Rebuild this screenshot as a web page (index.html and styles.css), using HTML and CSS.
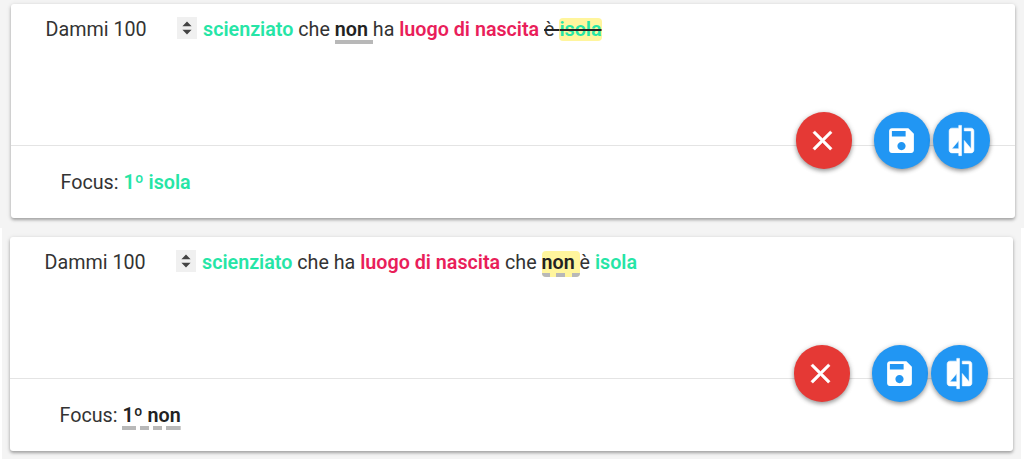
FILE: index.html
```html
<!DOCTYPE html>
<html lang="it">
<head>
<meta charset="utf-8">
<title>Dammi 100</title>
<link rel="stylesheet" href="styles.css">
</head>
<body>
<svg class="defs" aria-hidden="true">
  <symbol id="close" viewBox="0 0 24 24"><path stroke="#fff" stroke-width=".35" d="M19 6.41L17.59 5 12 10.59 6.41 5 5 6.41 10.59 12 5 17.59 6.41 19 12 13.41 17.59 19 19 17.59 13.41 12z"/></symbol>
  <symbol id="save" viewBox="0 0 24 24"><path d="M17 3H5c-1.11 0-2 .9-2 2v14c0 1.1.89 2 2 2h14c1.1 0 2-.9 2-2V7l-4-4zm-5 16c-1.66 0-3-1.34-3-3s1.34-3 3-3 3 1.34 3 3-1.34 3-3 3zm3-10H5V5h10v4z"/></symbol>
  <symbol id="compare" viewBox="0 0 24 24"><path stroke="#fff" stroke-width=".4" d="M10 3H5c-1.1 0-2 .9-2 2v14c0 1.1.9 2 2 2h5v2h2V1h-2v2zm0 15H5l5-6v6zm9-15h-5v2h5v13l-5-6v9h5c1.1 0 2-.9 2-2V5c0-1.1-.9-2-2-2z"/></symbol>
  <symbol id="spin" viewBox="0 0 20 22"><path d="M10 4.5l4.6 4.7H5.4zM10 17.5l4.6-4.7H5.4z"/></symbol>
</svg>

<section class="screen screen-first">
  <article class="card">
    <div class="query">
      <span class="limit">Dammi 100</span>
      <svg class="spin"><use href="#spin"/></svg>
      <p class="sentence"><b class="entity">scienziato</b> che <b class="neg">non </b>ha <b class="relation">luogo di nascita</b> <span class="removed">è <b class="entity mark">isola</b></span></p>
    </div>
    <div class="focus">Focus: <b class="entity">1º isola</b></div>
    <div class="actions">
      <button class="fab fab-close"><svg><use href="#close"/></svg></button>
      <button class="fab"><svg><use href="#save"/></svg></button>
      <button class="fab"><svg><use href="#compare"/></svg></button>
    </div>
  </article>
</section>

<section class="screen screen-second">
  <article class="card">
    <div class="query">
      <span class="limit">Dammi 100</span>
      <svg class="spin"><use href="#spin"/></svg>
      <p class="sentence"><b class="entity">scienziato</b> che ha <b class="relation">luogo di nascita</b> che <b class="neg neg-mark">non </b>è <b class="entity">isola</b></p>
    </div>
    <div class="focus">Focus: <b class="neg neg-focus">1º non</b></div>
    <div class="actions">
      <button class="fab fab-close"><svg><use href="#close"/></svg></button>
      <button class="fab"><svg><use href="#save"/></svg></button>
      <button class="fab"><svg><use href="#compare"/></svg></button>
    </div>
  </article>
</section>
</body>
</html>
```
FILE: styles.css
```css
* { box-sizing: border-box; }
body {
  margin: 0;
  height: 459px;
  overflow: hidden;
  background: #fff;
  color: #333;
  font: 400 19.72px/26px Roboto, sans-serif;
}
.defs { display: none; }
.screen { background: #f4f4f4; }
.screen-first { height: 228px; padding: 4px 9px 0 11px; }
.screen-second { height: 231px; margin: 0 3px 0 2px; padding: 9px 8px 0 8px; }
.card {
  position: relative;
  height: 214px;
  background: #fff;
  border-radius: 3px;
  box-shadow: 0 2px 3px rgba(0, 0, 0, .26), 0 1px 5px rgba(0, 0, 0, .14);
}
.query {
  display: flex;
  height: 142px;
  padding: 12px 0 0 34.5px;
  border-bottom: 1px solid #e4e4e4;
}
.screen-first .query { padding-top: 13px; }
.screen-second .query { padding-top: 12.5px; }
.limit { width: 131.5px; }
.spin { width: 20px; height: 22px; background: #f0f0f0; fill: #444; }
.sentence { margin: 0 0 0 6px; white-space: nowrap; }
.entity { color: #26e5a6; font-weight: 600; }
.relation { color: #e91e5a; font-weight: 600; }
.mark { background: #fff59d; border-radius: 4px; }
/* Underlines are painted as gradients to control each segment's length */
.neg {
  padding-bottom: 3px;
  color: #222;
  font-weight: 600;
  background: linear-gradient(#b8b8b8, #b8b8b8) bottom / 100% 4px no-repeat;
}
.neg-mark {
  border-radius: 4px;
  background: linear-gradient(90deg, #b8b8b8 8px, transparent 8px 14px, #b8b8b8 14px 23px, transparent 23px 30px, #b8b8b8 30px) bottom / 100% 4px no-repeat #fff59d;
}
.neg-focus {
  background: linear-gradient(90deg, #b8b8b8 14px, transparent 14px 18px, #b8b8b8 18px 27px, transparent 27px 31px, #b8b8b8 31px 40px, transparent 40px 44px, #b8b8b8 44px) bottom / 100% 4px no-repeat;
}
.removed { text-decoration: line-through; text-decoration-color: #222; text-decoration-thickness: 2px; }
.focus { padding: 23.5px 0 0 49.5px; }
.screen-first .focus { padding-top: 24px; }
.actions { position: absolute; top: 108px; right: 25.5px; display: flex; gap: 3px; }
.fab {
  display: grid;
  place-items: center;
  width: 56.5px;
  height: 56.5px;
  padding: 0;
  border: 0;
  border-radius: 50%;
  background: #2196f3;
  box-shadow: 0 2px 4px rgba(0, 0, 0, .35), 0 1px 6px rgba(0, 0, 0, .12);
}
.fab svg { width: 33px; height: 33px; fill: #fff; }
.fab-close { margin-right: 18.5px; background: #e53935; }
.fab-close svg { margin-right: 2px; }
```
